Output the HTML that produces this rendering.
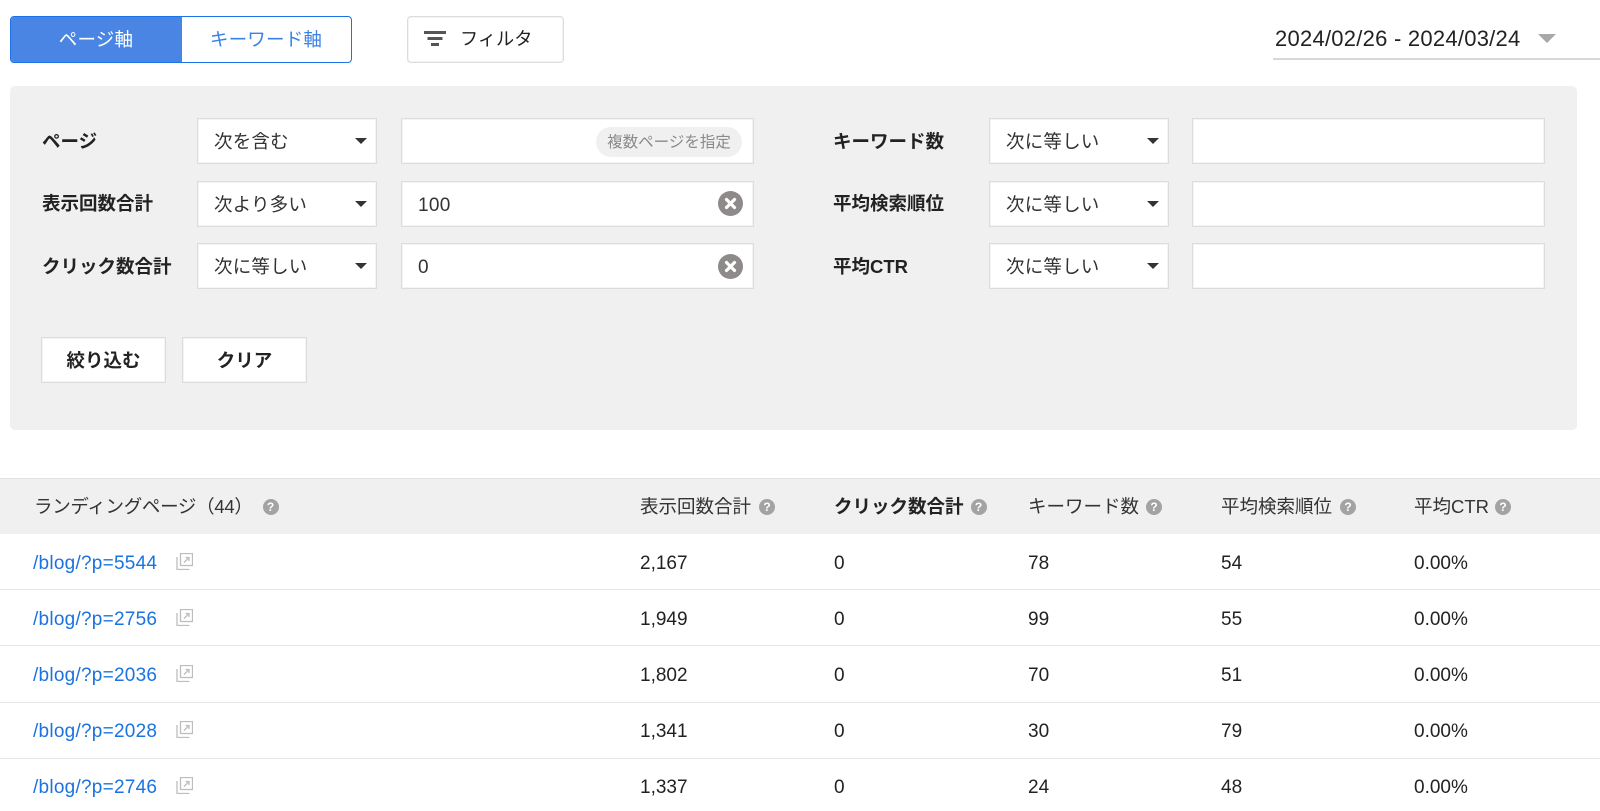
<!DOCTYPE html>
<html lang="ja"><head><meta charset="utf-8"><title>ページ軸</title>
<style>
*{box-sizing:border-box}
html,body{margin:0;padding:0;width:1600px;height:811px;overflow:hidden;background:#fff}
body{font-family:"Liberation Sans","Noto Sans CJK JP",sans-serif;color:#222;font-size:18.5px;position:relative;letter-spacing:0}
.a{position:absolute;white-space:nowrap}
.box{position:absolute;background:#fff;border:1px solid #dcdcdc;box-shadow:inset 0 0 0 1px #f4f4f4}
.lbl{position:absolute;font-weight:700;font-size:18.5px;line-height:24px;white-space:nowrap;color:#222}
.sel{position:absolute;background:#fff;border:1px solid #dcdcdc;box-shadow:inset 0 0 0 1px #f4f4f4;height:46px;width:180px;line-height:46px;padding-left:16px;color:#333;letter-spacing:.2px}
.sel:after{content:"";position:absolute;right:9px;top:19px;border-left:6px solid transparent;border-right:6px solid transparent;border-top:6px solid #333}
.btn{position:absolute;background:#fff;border:1px solid #dcdcdc;box-shadow:inset 0 0 0 1px #f4f4f4;height:46px;width:125px;text-align:center;line-height:46px;font-weight:700}
.th{position:absolute;top:494px;line-height:26px;white-space:nowrap;color:#333}
.q{display:inline-block;width:16px;height:16px;border-radius:50%;background:#a3a3a3;color:#fff;font-size:12px;font-weight:700;line-height:16px;text-align:center;letter-spacing:0;vertical-align:2px;margin-left:7px}
.hr{position:absolute;left:0;width:1600px;height:1px;background:#e6e6e6}
.c{position:absolute;white-space:nowrap;line-height:24px;color:#222;font-size:19px}
.lnk{color:#1a73e0;letter-spacing:.25px}
svg{position:absolute;display:block}
</style></head><body>

<div class="a" style="left:9.5px;top:16px;width:342px;height:47px;border:1.5px solid #1a73e8;border-radius:4px;overflow:hidden;background:#fff">
<div class="a" style="left:0;top:0;width:171px;height:45px;background:#4a85e3;color:#fff;text-align:center;line-height:46px;letter-spacing:.2px">ページ軸</div>
<div class="a" style="left:171px;top:0;width:169px;height:45px;color:#3b82e6;text-align:center;line-height:46px;letter-spacing:.2px">キーワード軸</div>
</div>

<div class="a" style="left:407px;top:16px;width:157px;height:47px;border:1px solid #dcdcdc;box-shadow:inset 0 0 0 1px #f4f4f4;border-radius:4px;background:#fff"></div>
<svg style="left:424px;top:30px" width="22" height="17" viewBox="0 0 22 17"><rect x="0" y="1" width="22" height="3" fill="#555"/><rect x="3.5" y="7" width="15" height="3" fill="#555"/><rect x="7" y="13" width="8" height="3" fill="#555"/></svg>
<div class="a" style="left:460px;top:27px;line-height:24px;font-size:18.2px;color:#222">フィルタ</div>

<div class="a" style="left:1275px;top:27px;line-height:24px;font-size:22px;letter-spacing:.25px;color:#222">2024/02/26 - 2024/03/24</div>
<div class="a" style="left:1538px;top:34px;width:0;height:0;border-left:9px solid transparent;border-right:9px solid transparent;border-top:9px solid #a8a8a8"></div>
<div class="a" style="left:1273px;top:58px;width:327px;height:1.5px;background:#d8d8d8"></div>

<div class="a" style="left:9.5px;top:86px;width:1567px;height:344px;background:#f0f0f0;border-radius:5px"></div>

<div class="lbl" style="left:42px;top:130px">ページ</div>
<div class="lbl" style="left:42px;top:192px">表示回数合計</div>
<div class="lbl" style="left:42px;top:255px">クリック数合計</div>
<div class="lbl" style="left:833px;top:130px">キーワード数</div>
<div class="lbl" style="left:833px;top:192px">平均検索順位</div>
<div class="lbl" style="left:833px;top:255px">平均CTR</div>

<div class="sel" style="left:197px;top:118px">次を含む</div>
<div class="sel" style="left:197px;top:180.5px">次より多い</div>
<div class="sel" style="left:197px;top:243px">次に等しい</div>
<div class="sel" style="left:989px;top:118px">次に等しい</div>
<div class="sel" style="left:989px;top:180.5px">次に等しい</div>
<div class="sel" style="left:989px;top:243px">次に等しい</div>

<div class="box" style="left:401px;top:118px;width:353px;height:46px"></div>
<div class="a" style="left:596px;top:127px;width:146px;height:30px;border-radius:15px;background:#f0f0f0;color:#8a8a8a;font-size:15.5px;line-height:32px;text-align:center">複数ページを指定</div>
<div class="box" style="left:401px;top:180.5px;width:353px;height:46px"></div>
<div class="a" style="left:418px;top:193.5px;line-height:24px;font-size:19px;letter-spacing:.3px;color:#333">100</div>
<svg style="left:718px;top:191px" width="25" height="25" viewBox="0 0 25 25"><circle cx="12.5" cy="12.5" r="12.5" fill="#8f8a8a"/><path d="M8.5 8.5l8 8M16.5 8.5l-8 8" stroke="#fff" stroke-width="3.2" stroke-linecap="round"/></svg>
<div class="box" style="left:401px;top:243px;width:353px;height:46px"></div>
<div class="a" style="left:418px;top:256px;line-height:24px;font-size:19px;color:#333">0</div>
<svg style="left:718px;top:253.5px" width="25" height="25" viewBox="0 0 25 25"><circle cx="12.5" cy="12.5" r="12.5" fill="#8f8a8a"/><path d="M8.5 8.5l8 8M16.5 8.5l-8 8" stroke="#fff" stroke-width="3.2" stroke-linecap="round"/></svg>

<div class="box" style="left:1192px;top:118px;width:353px;height:46px"></div>
<div class="box" style="left:1192px;top:180.5px;width:353px;height:46px"></div>
<div class="box" style="left:1192px;top:243px;width:353px;height:46px"></div>

<div class="btn" style="left:41px;top:337px">絞り込む</div>
<div class="btn" style="left:182px;top:337px">クリア</div>

<div class="a" style="left:0;top:478px;width:1600px;height:56px;background:#f0f0f0;border-top:1px solid #e2e2e2"></div>
<div class="th" style="left:34px;letter-spacing:-.3px">ランディングページ（44）<span class="q" style="margin-left:10px">?</span></div>
<div class="th" style="left:640px">表示回数合計<span class="q" style="margin-left:8px">?</span></div>
<div class="th" style="left:834px;font-weight:700;color:#222">クリック数合計<span class="q">?</span></div>
<div class="th" style="left:1028px">キーワード数<span class="q">?</span></div>
<div class="th" style="left:1221px">平均検索順位<span class="q" style="margin-left:8px">?</span></div>
<div class="th" style="left:1414px">平均CTR<span class="q" style="margin-left:6px">?</span></div>

<div class="hr" style="top:589px"></div>
<div class="hr" style="top:645px"></div>
<div class="hr" style="top:702px"></div>
<div class="hr" style="top:758px"></div>

<div class="c lnk" style="left:33px;top:552px">/blog/?p=5544</div>
<div class="c" style="left:640px;top:552px">2,167</div><div class="c" style="left:834px;top:552px">0</div><div class="c" style="left:1028px;top:552px">78</div><div class="c" style="left:1221px;top:552px">54</div><div class="c" style="left:1414px;top:552px">0.00%</div>
<svg style="left:176px;top:553px" width="17" height="17" viewBox="0 0 17 17" fill="none" stroke="#bdbdbd" stroke-width="1.3"><rect x="4.5" y=".5" width="12" height="12"/><path d="M1 4v12.5h12.5M8 9.5l5-5M9.5 4.5H13V8"/></svg>

<div class="c lnk" style="left:33px;top:608px">/blog/?p=2756</div>
<div class="c" style="left:640px;top:608px">1,949</div><div class="c" style="left:834px;top:608px">0</div><div class="c" style="left:1028px;top:608px">99</div><div class="c" style="left:1221px;top:608px">55</div><div class="c" style="left:1414px;top:608px">0.00%</div>
<svg style="left:176px;top:609px" width="17" height="17" viewBox="0 0 17 17" fill="none" stroke="#bdbdbd" stroke-width="1.3"><rect x="4.5" y=".5" width="12" height="12"/><path d="M1 4v12.5h12.5M8 9.5l5-5M9.5 4.5H13V8"/></svg>

<div class="c lnk" style="left:33px;top:664px">/blog/?p=2036</div>
<div class="c" style="left:640px;top:664px">1,802</div><div class="c" style="left:834px;top:664px">0</div><div class="c" style="left:1028px;top:664px">70</div><div class="c" style="left:1221px;top:664px">51</div><div class="c" style="left:1414px;top:664px">0.00%</div>
<svg style="left:176px;top:665px" width="17" height="17" viewBox="0 0 17 17" fill="none" stroke="#bdbdbd" stroke-width="1.3"><rect x="4.5" y=".5" width="12" height="12"/><path d="M1 4v12.5h12.5M8 9.5l5-5M9.5 4.5H13V8"/></svg>

<div class="c lnk" style="left:33px;top:720px">/blog/?p=2028</div>
<div class="c" style="left:640px;top:720px">1,341</div><div class="c" style="left:834px;top:720px">0</div><div class="c" style="left:1028px;top:720px">30</div><div class="c" style="left:1221px;top:720px">79</div><div class="c" style="left:1414px;top:720px">0.00%</div>
<svg style="left:176px;top:721px" width="17" height="17" viewBox="0 0 17 17" fill="none" stroke="#bdbdbd" stroke-width="1.3"><rect x="4.5" y=".5" width="12" height="12"/><path d="M1 4v12.5h12.5M8 9.5l5-5M9.5 4.5H13V8"/></svg>

<div class="c lnk" style="left:33px;top:776px">/blog/?p=2746</div>
<div class="c" style="left:640px;top:776px">1,337</div><div class="c" style="left:834px;top:776px">0</div><div class="c" style="left:1028px;top:776px">24</div><div class="c" style="left:1221px;top:776px">48</div><div class="c" style="left:1414px;top:776px">0.00%</div>
<svg style="left:176px;top:777px" width="17" height="17" viewBox="0 0 17 17" fill="none" stroke="#bdbdbd" stroke-width="1.3"><rect x="4.5" y=".5" width="12" height="12"/><path d="M1 4v12.5h12.5M8 9.5l5-5M9.5 4.5H13V8"/></svg>

</body></html>
